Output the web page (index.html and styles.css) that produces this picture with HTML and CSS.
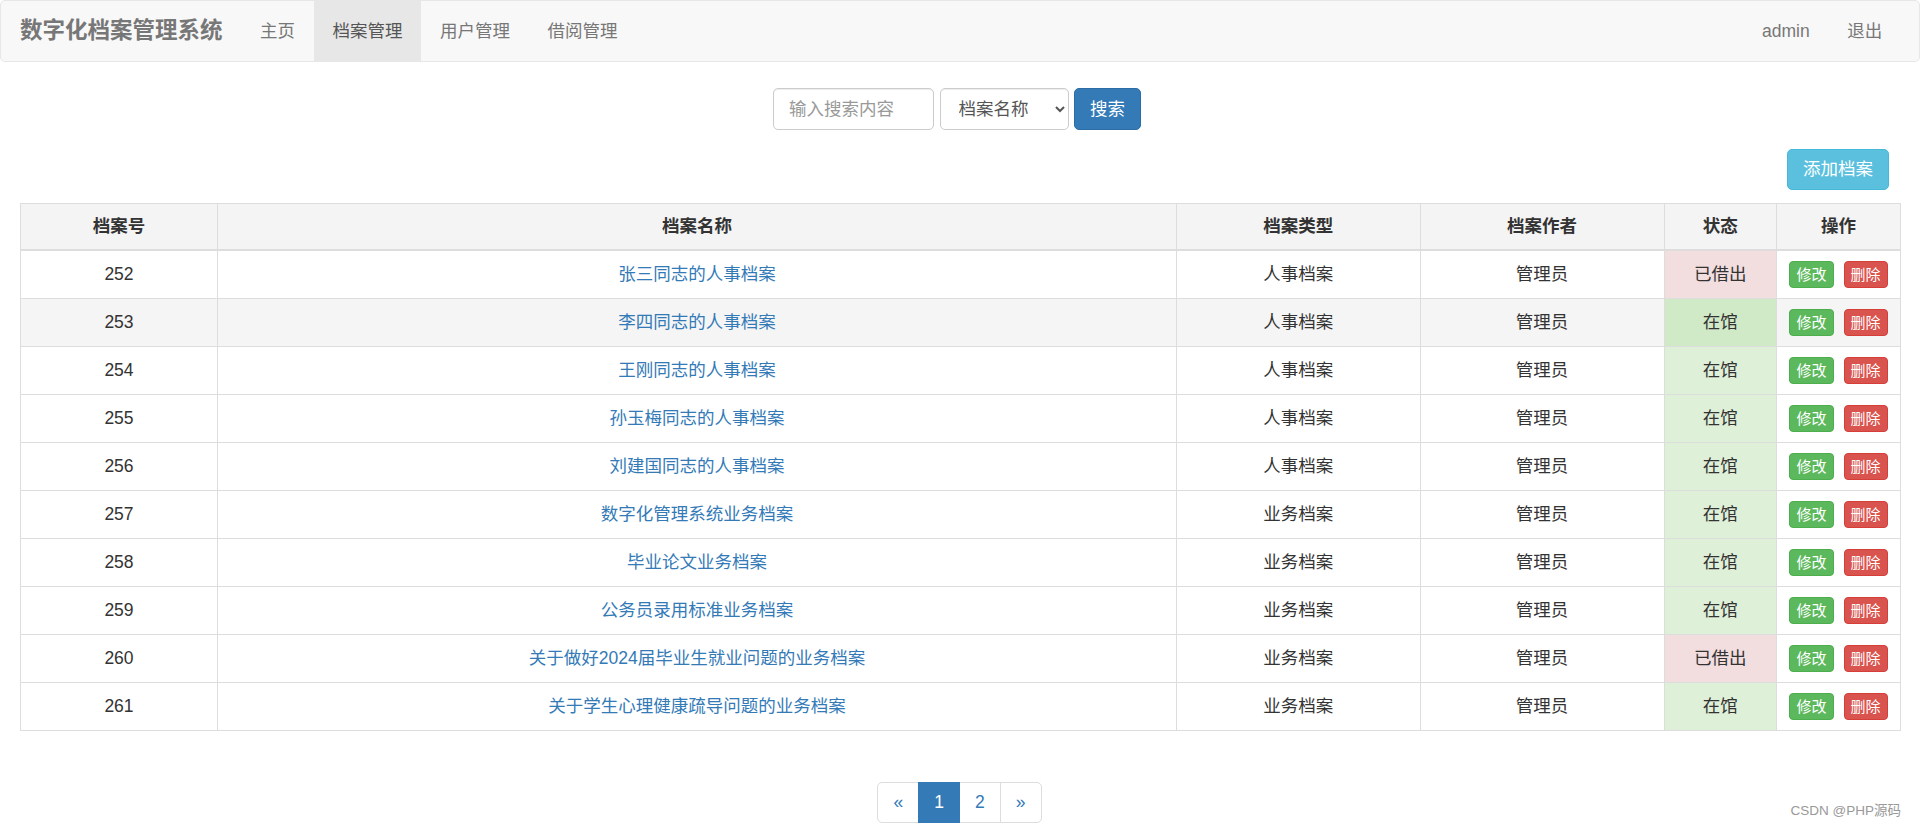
FILE: index.html
```html
<!DOCTYPE html>
<html lang="zh-CN">
<head>
<meta charset="utf-8">
<title>数字化档案管理系统</title>
<link rel="stylesheet" href="styles.css">
</head>
<body>
<nav class="navbar">
  <a class="brand" href="#">数字化档案管理系统</a>
  <ul class="nav">
    <li><a href="#">主页</a></li>
    <li class="active"><a href="#">档案管理</a></li>
    <li><a href="#">用户管理</a></li>
    <li><a href="#">借阅管理</a></li>
  </ul>
  <ul class="nav nav-right">
    <li><a href="#">admin</a></li>
    <li><a href="#">退出</a></li>
  </ul>
</nav>

<form class="search">
  <input class="form-control search-input" type="text" placeholder="输入搜索内容">
  <select class="form-control search-select">
    <option>档案名称</option>
  </select>
  <button type="button" class="btn btn-primary">搜索</button>
</form>

<div class="content">
  <div class="toolbar">
    <button type="button" class="btn btn-info">添加档案</button>
  </div>
  <table class="table">
    <colgroup>
      <col class="c1"><col class="c2"><col class="c3"><col class="c4"><col class="c5"><col class="c6">
    </colgroup>
    <thead>
      <tr><th>档案号</th><th>档案名称</th><th>档案类型</th><th>档案作者</th><th>状态</th><th>操作</th></tr>
    </thead>
    <tbody>
      <tr><td>252</td><td><a href="#">张三同志的人事档案</a></td><td>人事档案</td><td>管理员</td><td class="danger">已借出</td><td><span class="btn-xs btn-success">修改</span><span class="btn-xs btn-danger">删除</span></td></tr>
      <tr class="hover"><td>253</td><td><a href="#">李四同志的人事档案</a></td><td>人事档案</td><td>管理员</td><td class="success">在馆</td><td><span class="btn-xs btn-success">修改</span><span class="btn-xs btn-danger">删除</span></td></tr>
      <tr><td>254</td><td><a href="#">王刚同志的人事档案</a></td><td>人事档案</td><td>管理员</td><td class="success">在馆</td><td><span class="btn-xs btn-success">修改</span><span class="btn-xs btn-danger">删除</span></td></tr>
      <tr><td>255</td><td><a href="#">孙玉梅同志的人事档案</a></td><td>人事档案</td><td>管理员</td><td class="success">在馆</td><td><span class="btn-xs btn-success">修改</span><span class="btn-xs btn-danger">删除</span></td></tr>
      <tr><td>256</td><td><a href="#">刘建国同志的人事档案</a></td><td>人事档案</td><td>管理员</td><td class="success">在馆</td><td><span class="btn-xs btn-success">修改</span><span class="btn-xs btn-danger">删除</span></td></tr>
      <tr><td>257</td><td><a href="#">数字化管理系统业务档案</a></td><td>业务档案</td><td>管理员</td><td class="success">在馆</td><td><span class="btn-xs btn-success">修改</span><span class="btn-xs btn-danger">删除</span></td></tr>
      <tr><td>258</td><td><a href="#">毕业论文业务档案</a></td><td>业务档案</td><td>管理员</td><td class="success">在馆</td><td><span class="btn-xs btn-success">修改</span><span class="btn-xs btn-danger">删除</span></td></tr>
      <tr><td>259</td><td><a href="#">公务员录用标准业务档案</a></td><td>业务档案</td><td>管理员</td><td class="success">在馆</td><td><span class="btn-xs btn-success">修改</span><span class="btn-xs btn-danger">删除</span></td></tr>
      <tr><td>260</td><td><a href="#">关于做好2024届毕业生就业问题的业务档案</a></td><td>业务档案</td><td>管理员</td><td class="danger">已借出</td><td><span class="btn-xs btn-success">修改</span><span class="btn-xs btn-danger">删除</span></td></tr>
      <tr><td>261</td><td><a href="#">关于学生心理健康疏导问题的业务档案</a></td><td>业务档案</td><td>管理员</td><td class="success">在馆</td><td><span class="btn-xs btn-success">修改</span><span class="btn-xs btn-danger">删除</span></td></tr>
    </tbody>
  </table>

  <ul class="pagination">
    <li><a href="#">&laquo;</a></li>
    <li class="active"><a href="#">1</a></li>
    <li><a href="#">2</a></li>
    <li><a href="#">&raquo;</a></li>
  </ul>
</div>

<div class="watermark">CSDN @PHP源码</div>
</body>
</html>
```

FILE: styles.css
```css
* { box-sizing: border-box; }

html, body {
  margin: 0;
  padding: 0;
}

body {
  font-family: "Liberation Sans", "Noto Sans CJK SC", sans-serif;
  font-size: 17.5px;
  line-height: 25px;
  color: #333;
  background: #fff;
  position: relative;
  min-height: 827px;
}

a { text-decoration: none; }

/* navbar */
.navbar {
  display: flex;
  align-items: stretch;
  height: 62px;
  background: #f8f8f8;
  border: 1px solid #e7e7e7;
  border-radius: 5px;
  margin-bottom: 26px;
}

.brand {
  display: block;
  padding: 0 18.75px 0 19px;
  line-height: 60px;
  font-size: 22.5px;
  font-weight: bold;
  color: #777;
}

.nav {
  display: flex;
  list-style: none;
  margin: 0;
  padding: 0;
}

.nav li a {
  display: block;
  padding: 0 18.75px;
  line-height: 60px;
  color: #777;
}

.nav li.active a {
  background: #e7e7e7;
  color: #555;
}

.nav-right {
  margin-left: auto;
  margin-right: 18px;
}

/* search */
.search {
  display: flex;
  justify-content: center;
  gap: 5.5px;
  padding-right: 6px;
  margin: 0;
}

.form-control {
  height: 42px;
  border: 1px solid #ccc;
  border-radius: 5px;
  font-family: "Liberation Sans", "Noto Sans CJK SC", sans-serif;
  font-size: 17.5px;
  color: #555;
  background: #fff;
  box-shadow: inset 0 1px 1px rgba(0,0,0,.075);
}

.search-input {
  width: 161px;
  padding: 7px 15px;
}

.search-input::placeholder { color: #999; }

.search-select {
  width: 129px;
  padding: 6px 8px 6px 14px;
}

.btn {
  display: inline-block;
  height: 42px;
  padding: 7px 15px;
  font-family: "Liberation Sans", "Noto Sans CJK SC", sans-serif;
  font-size: 17.5px;
  line-height: 25px;
  border: 1px solid transparent;
  border-radius: 5px;
  color: #fff;
  cursor: pointer;
}

.btn-primary {
  background: #337ab7;
  border-color: #2e6da4;
}

.btn-info {
  background: #5bc0de;
  border-color: #46b8da;
  height: 41px;
}

/* content */
.content {
  padding: 0 20px;
}

.toolbar {
  display: flex;
  justify-content: flex-end;
  padding-right: 11px;
  margin-top: 19px;
  margin-bottom: 13px;
}

.table {
  width: 1880px;
  table-layout: fixed;
  border-collapse: collapse;
  border: 1px solid #ddd;
}

.c1 { width: 197px; }
.c2 { width: 959px; }
.c3 { width: 243.5px; }
.c4 { width: 244px; }
.c5 { width: 112.5px; }
.c6 { width: 124px; }

.table th,
.table td {
  border: 1px solid #ddd;
  text-align: center;
  vertical-align: middle;
  padding: 0 10px;
}

.table thead th {
  height: 46.5px;
  background: #f4f4f4;
  font-weight: bold;
  border-bottom: 2px solid #ddd;
}

.table tbody td {
  height: 48px;
}

.table td a { color: #337ab7; }

.table td.danger { background: #f2dede; }
.table td.success { background: #dff0d8; }

.table tr.hover td { background: #f5f5f5; }
.table tr.hover td.success { background: #d0e9c6; }

.btn-xs {
  display: inline-block;
  vertical-align: middle;
  height: 27px;
  padding: 0 6px;
  font-size: 15px;
  line-height: 25px;
  color: #fff;
  border: 1px solid transparent;
  border-radius: 4px;
}

.btn-xs + .btn-xs { margin-left: 10px; }

.btn-success {
  background: #5cb85c;
  border-color: #4cae4c;
}

.btn-danger {
  background: #d9534f;
  border-color: #d43f3a;
}

/* pagination */
.pagination {
  display: flex;
  justify-content: center;
  list-style: none;
  padding: 0;
  margin: 51px 0 0;
}

.pagination li a {
  display: block;
  height: 41px;
  padding: 7.5px 15px;
  line-height: 25px;
  color: #337ab7;
  background: #fff;
  border: 1px solid #ddd;
  margin-left: -1px;
}

.pagination li:first-child a {
  border-radius: 5px 0 0 5px;
  width: 42px;
  text-align: center;
  padding: 7.5px 0;
}

.pagination li:last-child a {
  border-radius: 0 5px 5px 0;
  width: 42px;
  text-align: center;
  padding: 7.5px 0;
}

.pagination li.active a {
  background: #337ab7;
  border-color: #337ab7;
  color: #fff;
  position: relative;
}

.watermark {
  position: absolute;
  right: 19px;
  bottom: 7px;
  font-size: 13.5px;
  line-height: 18px;
  color: #999;
}
```
